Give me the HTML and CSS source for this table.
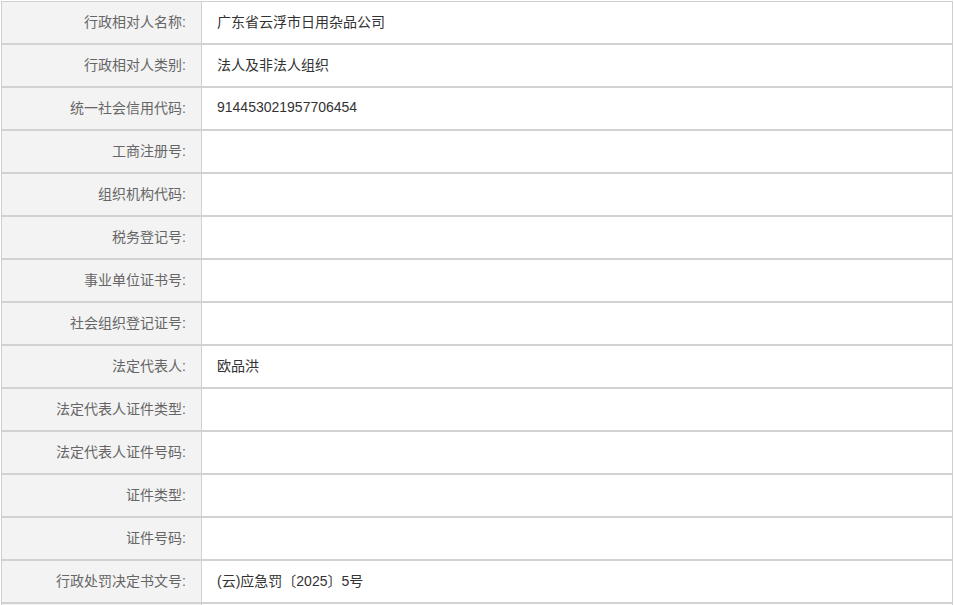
FILE: index.html
```html
<!DOCTYPE html>
<html lang="zh-CN">
<head>
<meta charset="utf-8">
<link rel="stylesheet" href="styles.css">
</head>
<body>
<div class="info-table">
  <div class="row"><div class="label">行政相对人名称:</div><div class="value">广东省云浮市日用杂品公司</div></div>
  <div class="row"><div class="label">行政相对人类别:</div><div class="value">法人及非法人组织</div></div>
  <div class="row"><div class="label">统一社会信用代码:</div><div class="value">914453021957706454</div></div>
  <div class="row"><div class="label">工商注册号:</div><div class="value"></div></div>
  <div class="row"><div class="label">组织机构代码:</div><div class="value"></div></div>
  <div class="row"><div class="label">税务登记号:</div><div class="value"></div></div>
  <div class="row"><div class="label">事业单位证书号:</div><div class="value"></div></div>
  <div class="row"><div class="label">社会组织登记证号:</div><div class="value"></div></div>
  <div class="row"><div class="label">法定代表人:</div><div class="value">欧品洪</div></div>
  <div class="row"><div class="label">法定代表人证件类型:</div><div class="value"></div></div>
  <div class="row"><div class="label">法定代表人证件号码:</div><div class="value"></div></div>
  <div class="row"><div class="label">证件类型:</div><div class="value"></div></div>
  <div class="row"><div class="label">证件号码:</div><div class="value"></div></div>
  <div class="row"><div class="label">行政处罚决定书文号:</div><div class="value">(云)应急罚〔2025〕5号</div></div>
  <div class="row"><div class="label"></div><div class="value"></div></div>
</div>
</body>
</html>
```
FILE: styles.css
```css
html, body {
  margin: 0;
  padding: 0;
  background: #ffffff;
}
body {
  padding: 1px;
  font-family: "Liberation Sans", "Noto Sans CJK SC", sans-serif;
  font-size: 14px;
}
.info-table {
  width: 950px;
  border: 1px solid #cfcfcf;
  border-bottom: none;
}
.row {
  display: grid;
  grid-template-columns: 200px 1fr;
  height: 41px;
  border-bottom: 2px solid #d2d2d2;
}
.label {
  background: #f3f3f3;
  border-right: 1px solid #d2d2d2;
  color: #666666;
  padding-right: 15px;
  padding-bottom: 3px;
  display: flex;
  align-items: center;
  justify-content: flex-end;
}
.value {
  color: #333333;
  padding-left: 15px;
  padding-bottom: 3px;
  display: flex;
  align-items: center;
}
```
